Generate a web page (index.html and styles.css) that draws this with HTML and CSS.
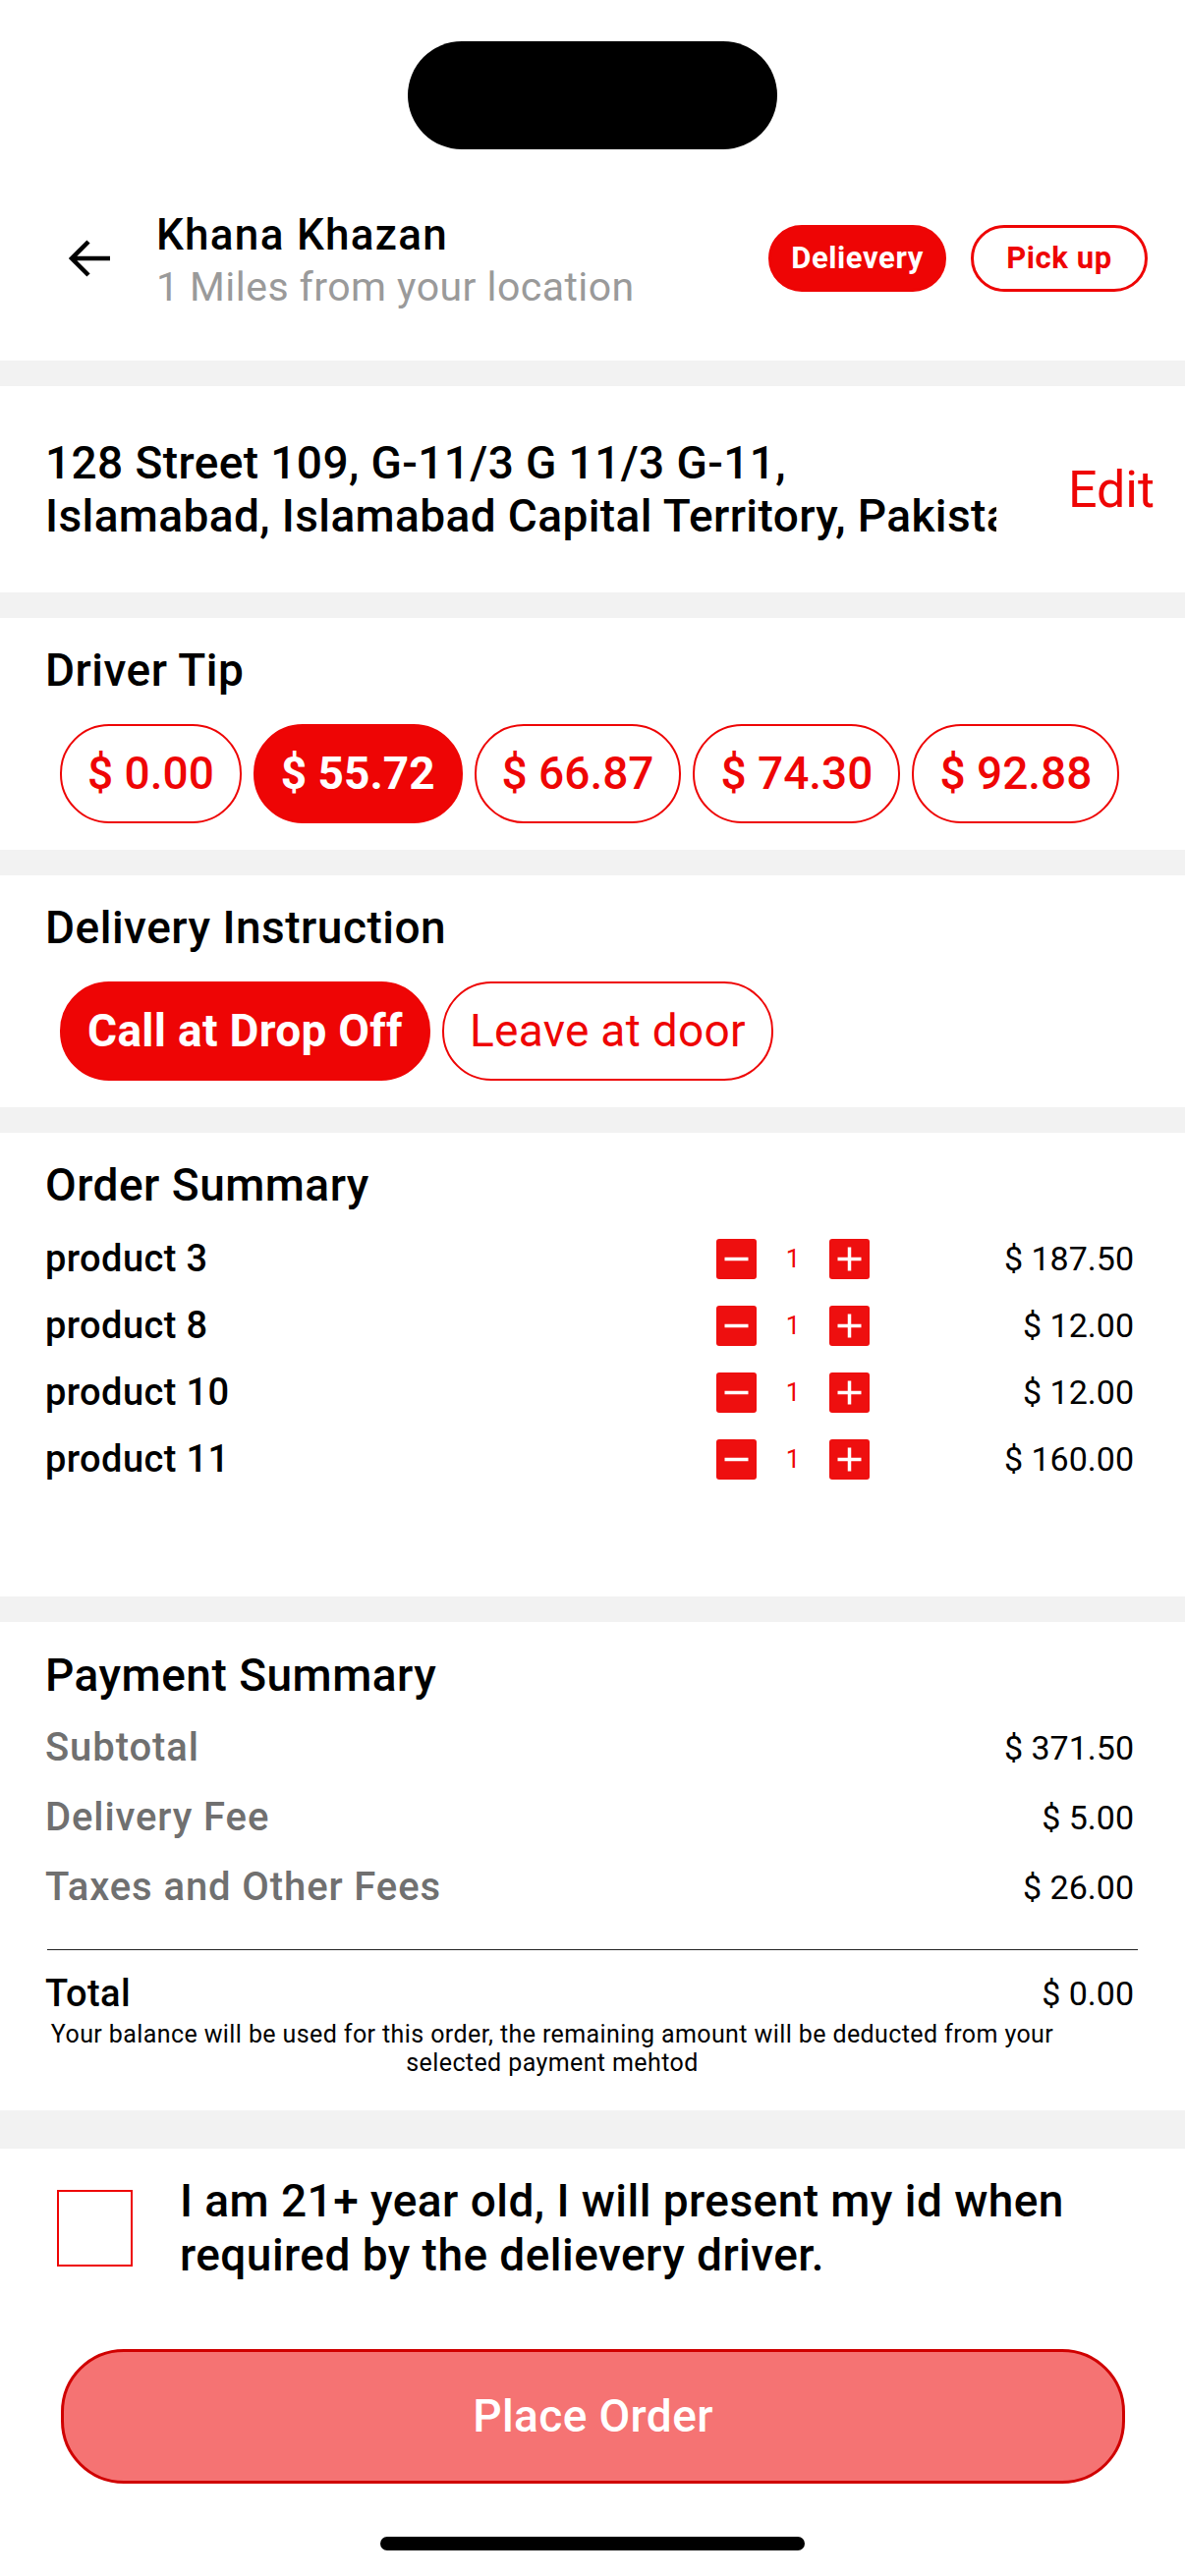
FILE: index.html
```html
<!DOCTYPE html>
<html>
<head>
<meta charset="utf-8">
<link rel="stylesheet" href="styles.css">
</head>
<body>
<div class="screen">
  <section class="top">
    <div class="island"></div>
    <div class="header">
      <svg class="back" width="44" height="40" viewBox="0 0 44 40">
        <path d="M43 20H5 M21 3 L4 20 L21 37" fill="none" stroke="#000" stroke-width="4.5"/>
      </svg>
      <div class="store">
        <div class="store-name">Khana Khazan</div>
        <div class="store-dist">1 Miles from your location</div>
      </div>
      <div class="modes">
        <div class="mode mode-on">Delievery</div>
        <div class="mode mode-off">Pick up</div>
      </div>
    </div>
  </section>

  <section class="card address">
    <div class="addr-text">
      <span class="addr-line">128 Street 109, G-11/3 G 11/3 G-11,</span>
      <span class="addr-line">Islamabad, Islamabad Capital Territory, Pakistan</span>
    </div>
    <div class="edit">Edit</div>
  </section>

  <section class="card block">
    <h2 class="title">Driver Tip</h2>
    <div class="chips">
      <div class="chip">$ 0.00</div>
      <div class="chip chip-on">$ 55.72</div>
      <div class="chip">$ 66.87</div>
      <div class="chip">$ 74.30</div>
      <div class="chip">$ 92.88</div>
    </div>
  </section>

  <section class="card block">
    <h2 class="title">Delivery Instruction</h2>
    <div class="chips">
      <div class="chip chip-on chip-wide">Call at Drop Off</div>
      <div class="chip chip-plain chip-wide">Leave at door</div>
    </div>
  </section>

  <section class="card order">
    <h2 class="title">Order Summary</h2>
    <div class="items">
      <div class="item">
        <span class="item-name">product 3</span>
        <div class="stepper">
          <svg class="step" viewBox="0 0 41 41"><path d="M8.5 20.5H32.5"/></svg>
          <span class="qty">1</span>
          <svg class="step" viewBox="0 0 41 41"><path d="M8.5 20.5H32.5M20.5 8.5V32.5"/></svg>
        </div>
        <span class="item-price">$ 187.50</span>
      </div>
      <div class="item">
        <span class="item-name">product 8</span>
        <div class="stepper">
          <svg class="step" viewBox="0 0 41 41"><path d="M8.5 20.5H32.5"/></svg>
          <span class="qty">1</span>
          <svg class="step" viewBox="0 0 41 41"><path d="M8.5 20.5H32.5M20.5 8.5V32.5"/></svg>
        </div>
        <span class="item-price">$ 12.00</span>
      </div>
      <div class="item">
        <span class="item-name">product 10</span>
        <div class="stepper">
          <svg class="step" viewBox="0 0 41 41"><path d="M8.5 20.5H32.5"/></svg>
          <span class="qty">1</span>
          <svg class="step" viewBox="0 0 41 41"><path d="M8.5 20.5H32.5M20.5 8.5V32.5"/></svg>
        </div>
        <span class="item-price">$ 12.00</span>
      </div>
      <div class="item">
        <span class="item-name">product 11</span>
        <div class="stepper">
          <svg class="step" viewBox="0 0 41 41"><path d="M8.5 20.5H32.5"/></svg>
          <span class="qty">1</span>
          <svg class="step" viewBox="0 0 41 41"><path d="M8.5 20.5H32.5M20.5 8.5V32.5"/></svg>
        </div>
        <span class="item-price">$ 160.00</span>
      </div>
    </div>
  </section>

  <section class="card payment">
    <h2 class="title">Payment Summary</h2>
    <div class="pay-rows">
      <div class="pay-row"><span class="pay-label">Subtotal</span><span class="pay-value">$ 371.50</span></div>
      <div class="pay-row"><span class="pay-label">Delivery Fee</span><span class="pay-value">$ 5.00</span></div>
      <div class="pay-row"><span class="pay-label">Taxes and Other Fees</span><span class="pay-value">$ 26.00</span></div>
    </div>
    <div class="rule"></div>
    <div class="total-row"><span class="total-label">Total</span><span class="pay-value">$ 0.00</span></div>
    <p class="note">Your balance will be used for this order, the remaining amount will be deducted from your<br>selected payment mehtod</p>
  </section>

  <section class="card bottom">
    <div class="consent">
      <div class="checkbox"></div>
      <p class="consent-text">I am 21+ year old, I will present my id when required by the delievery driver.</p>
    </div>
    <div class="place">Place Order</div>
    <div class="home-bar"></div>
  </section>
</div>
</body>
</html>
```

FILE: styles.css
```css
* { box-sizing: border-box; }
html, body { margin: 0; padding: 0; }
body {
  width: 1206px;
  height: 2622px;
  background: #f2f2f2;
  font-family: Roboto, "Noto Sans", Arial, sans-serif;
  color: #000;
  overflow: hidden;
}
.screen {
  display: flex;
  flex-direction: column;
  gap: 26px;
  height: 2622px;
}
.card, .top { background: #fff; }

/* top / header */
.top {
  height: 367px;
  padding-top: 42px;
}
.island {
  width: 376px;
  height: 110px;
  margin: 0 auto;
  background: #000;
  border-radius: 55px;
}
.header {
  height: 215px;
  padding: 38px 38px 31px 69px;
  display: flex;
  align-items: center;
}
.back { flex: none; display: block; }
.store {
  margin-left: 46px;
  padding-top: 8px;
  flex: 1;
}
.store-name {
  font-size: 44px;
  font-weight: 500;
  line-height: 50px;
  letter-spacing: 1.3px;
}
.store-dist {
  font-size: 41px;
  line-height: 56px;
  letter-spacing: 0.45px;
  color: #9a9a9a;
}
.modes { display: flex; gap: 25px; }
.mode {
  height: 68px;
  border: 3px solid #ee0505;
  border-radius: 34px;
  font-size: 31px;
  font-weight: 700;
  line-height: 62px;
  letter-spacing: 0.6px;
  text-align: center;
}
.mode-on { width: 181px; background: #ee0505; color: #fff; }
.mode-off { width: 180px; color: #ee0505; }

/* address */
.address {
  height: 210px;
  display: flex;
  align-items: center;
  padding: 0 31px 0 46px;
}
.addr-text {
  width: 968px;
  font-size: 46px;
  font-weight: 500;
  line-height: 54px;
  letter-spacing: 0.4px;
}
.addr-line {
  display: block;
  white-space: nowrap;
  overflow: hidden;
}
.edit {
  margin-left: auto;
  font-size: 52px;
  color: #ee0505;
}

/* section with chips */
.title {
  margin: 0;
  font-size: 46px;
  font-weight: 500;
  line-height: 54px;
  letter-spacing: 0.5px;
}
.block {
  padding: 26px 0 27px 46px;
}
.chips {
  display: flex;
  gap: 12px;
  margin-top: 28px;
  padding-left: 15px;
}
.chip {
  height: 101px;
  padding: 0 26px;
  border: 2px solid #ee0505;
  border-radius: 50px;
  font-size: 46px;
  font-weight: 500;
  line-height: 97px;
  color: #ee0505;
  white-space: nowrap;
}
.chip-on {
  background: #ee0505;
  color: #fff;
  font-weight: 700;
}
.chip-plain { font-weight: 400; }
.chip-wide { letter-spacing: 0.3px; }

/* order summary */
.order {
  padding: 26px 52px 0 46px;
  height: 472px;
}
.items { margin-top: 14px; }
.item {
  display: grid;
  grid-template-columns: 1fr 156px 269px;
  align-items: center;
  height: 68px;
}
.item-name {
  font-size: 38px;
  font-weight: 500;
  letter-spacing: 0.4px;
}
.stepper {
  display: flex;
  align-items: center;
}
.step {
  display: block;
  width: 41px;
  height: 41px;
  border-radius: 3px;
  background: #ee0f0f;
  fill: none;
  stroke: #fff;
  stroke-width: 3.5;
}
.qty {
  width: 74px;
  text-align: center;
  color: #ee0505;
  font-size: 26px;
}
.item-price {
  text-align: right;
  font-size: 34px;
}

/* payment */
.payment {
  padding: 27px 52px 34px 46px;
}
.pay-rows { margin-top: 11px; }
.pay-row, .total-row {
  display: flex;
  justify-content: space-between;
  align-items: center;
}
.pay-row { height: 71px; }
.pay-label {
  font-size: 40px;
  font-weight: 500;
  letter-spacing: 0.9px;
  color: #707070;
}
.pay-value { font-size: 34px; }
.rule {
  height: 1px;
  background: #222;
  margin: 28px -4px 0 2px;
}
.total-row { height: 50px; margin-top: 19px; }
.total-label {
  font-size: 38px;
  font-weight: 500;
  letter-spacing: 0.4px;
}
.note {
  margin: 2px 0 0 2px;
  width: 1028px;
  font-size: 25px;
  line-height: 29px;
  letter-spacing: 0.4px;
  text-align: center;
  white-space: nowrap;
}

/* bottom */
.bottom {
  flex: 1;
  margin-top: 13px;
  padding-top: 26px;
  display: flex;
  flex-direction: column;
}
.consent {
  display: flex;
  align-items: flex-start;
  padding: 0 30px 0 58px;
}
.checkbox {
  flex: none;
  width: 77px;
  height: 78px;
  margin-top: 16px;
  border: 2px solid #ee0505;
}
.consent-text {
  margin: 0 0 0 48px;
  font-size: 46px;
  font-weight: 500;
  line-height: 55px;
  letter-spacing: 0.45px;
}
.place {
  margin: 68px 61px 0 62px;
  height: 137px;
  border: 3px solid #d00000;
  border-radius: 64px;
  background: #f57373;
  color: #fff;
  font-size: 46px;
  font-weight: 500;
  line-height: 131px;
  letter-spacing: 0.4px;
  text-align: center;
}
.home-bar {
  width: 432px;
  height: 14px;
  margin: 54px auto 0;
  border-radius: 7px;
  background: #000;
}
```
